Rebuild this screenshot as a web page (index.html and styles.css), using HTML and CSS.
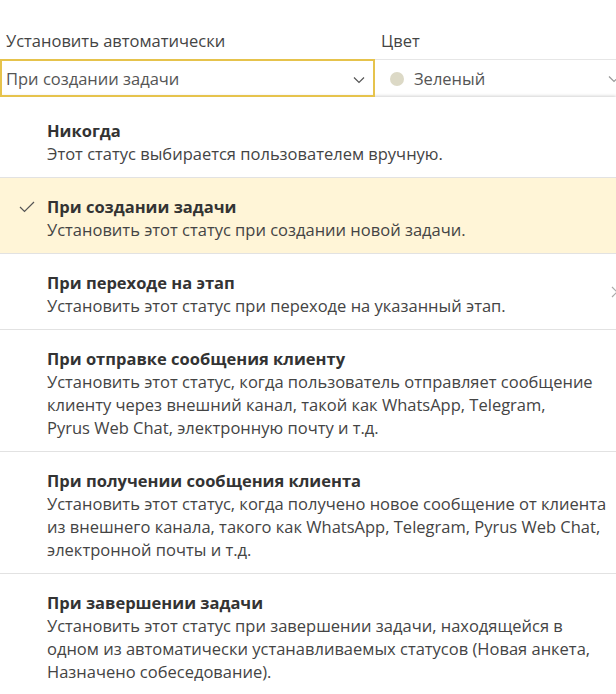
FILE: index.html
```html
<!DOCTYPE html>
<html lang="ru">

<head>
    <meta charset="utf-8">
    <meta name="viewport" content="width=device-width, initial-scale=1.0">
    <title>Статус</title>

    <link rel="stylesheet" href="styles.css">
</head>

<body>
    <section class="fields">
        <div class="field">
            <label class="label">Установить автоматически</label>
            <div class="select active">
                <span>При создании задачи</span>
                <svg class="chevron" width="12" height="8" viewBox="0 0 12 8"><path d="M1 1.5 L6 6.5 L11 1.5" fill="none" stroke="#555" stroke-width="1.2"/></svg>
            </div>
        </div>
        <div class="field">
            <label class="label">Цвет</label>
            <div class="select color">
                <span class="dot"></span>
                <span>Зеленый</span>
                <svg class="chevron" width="12" height="8" viewBox="0 0 12 8"><path d="M1 1.5 L6 6.5 L11 1.5" fill="none" stroke="#999" stroke-width="1.2"/></svg>
            </div>
        </div>
    </section>

    <ul class="options">
        <li class="option">
            <h3>Никогда</h3>
            <p>Этот статус выбирается пользователем вручную.</p>
        </li>
        <li class="option valgt">
            <svg class="check" width="16" height="12" viewBox="0 0 16 12"><path d="M1 6 L5.5 10.5 L15 1" fill="none" stroke="#555" stroke-width="1.2"/></svg>
            <h3>При создании задачи</h3>
            <p>Установить этот статус при создании новой задачи.</p>
        </li>
        <li class="option">
            <h3>При переходе на этап</h3>
            <p>Установить этот статус при переходе на указанный этап.</p>
            <svg class="arrow" width="8" height="12" viewBox="0 0 8 12"><path d="M1 1 L6 6 L1 11" fill="none" stroke="#aaa" stroke-width="1.2"/></svg>
        </li>
        <li class="option">
            <h3>При отправке сообщения клиенту</h3>
            <p>Установить этот статус, когда пользователь отправляет сообщение<br>клиенту через внешний канал, такой как WhatsApp, Telegram,<br>Pyrus Web Chat, электронную почту и т.д.</p>
        </li>
        <li class="option">
            <h3>При получении сообщения клиента</h3>
            <p>Установить этот статус, когда получено новое сообщение от клиента<br>из внешнего канала, такого как WhatsApp, Telegram, Pyrus Web Chat,<br>электронной почты и т.д.</p>
        </li>
        <li class="option">
            <h3>При завершении задачи</h3>
            <p>Установить этот статус при завершении задачи, находящейся в<br>одном из автоматически устанавливаемых статусов (Новая анкета,<br>Назначено собеседование).</p>
        </li>
    </ul>
</body>

</html>
```

FILE: styles.css
```css
* {
    box-sizing: border-box;
}

body {
    margin: 0;
    font-family: "Open Sans", "Noto Sans", sans-serif;
    font-size: 16.5px;
    color: #444;
    background: #fff;
    overflow: hidden;
}

.fields {
    display: grid;
    grid-template-columns: 375px 1fr;
    padding-top: 30px;
}

.label {
    display: block;
    height: 22px;
    line-height: 22px;
    margin-bottom: 7px;
    padding-left: 6px;
    color: #444;
}

.select {
    position: relative;
    display: flex;
    align-items: center;
    height: 38px;
    padding-left: 4px;
    color: #555;
}

.select.active {
    border: 2px solid #e6c34c;
}

.select.color {
    border-top: 1px solid #e6e6e6;
    padding-left: 15px;
}

.dot {
    width: 14px;
    height: 14px;
    border-radius: 50%;
    background: #dcd9c6;
    margin-right: 10px;
}

.chevron {
    position: absolute;
    right: 8px;
    top: 15px;
}

.select.color .chevron {
    right: -4px;
}

.options {
    list-style: none;
    margin: 0;
    padding: 5px 0 0;
    box-shadow: 0 -1px 3px rgba(0, 0, 0, 0.18);
}

.option {
    position: relative;
    padding: 17px 0 12px 47px;
    border-bottom: 1px solid #e2e2e2;
    line-height: 23px;
    white-space: nowrap;
}

.option h3 {
    margin: 0;
    font-size: 16.5px;
    font-weight: 700;
    color: #333;
}

.option p {
    margin: 0;
    color: #444;
}

.valgt {
    background: #fff5d7;
}

.check {
    position: absolute;
    left: 19px;
    top: 23px;
}

.arrow {
    position: absolute;
    right: -3px;
    top: 32px;
}
```
